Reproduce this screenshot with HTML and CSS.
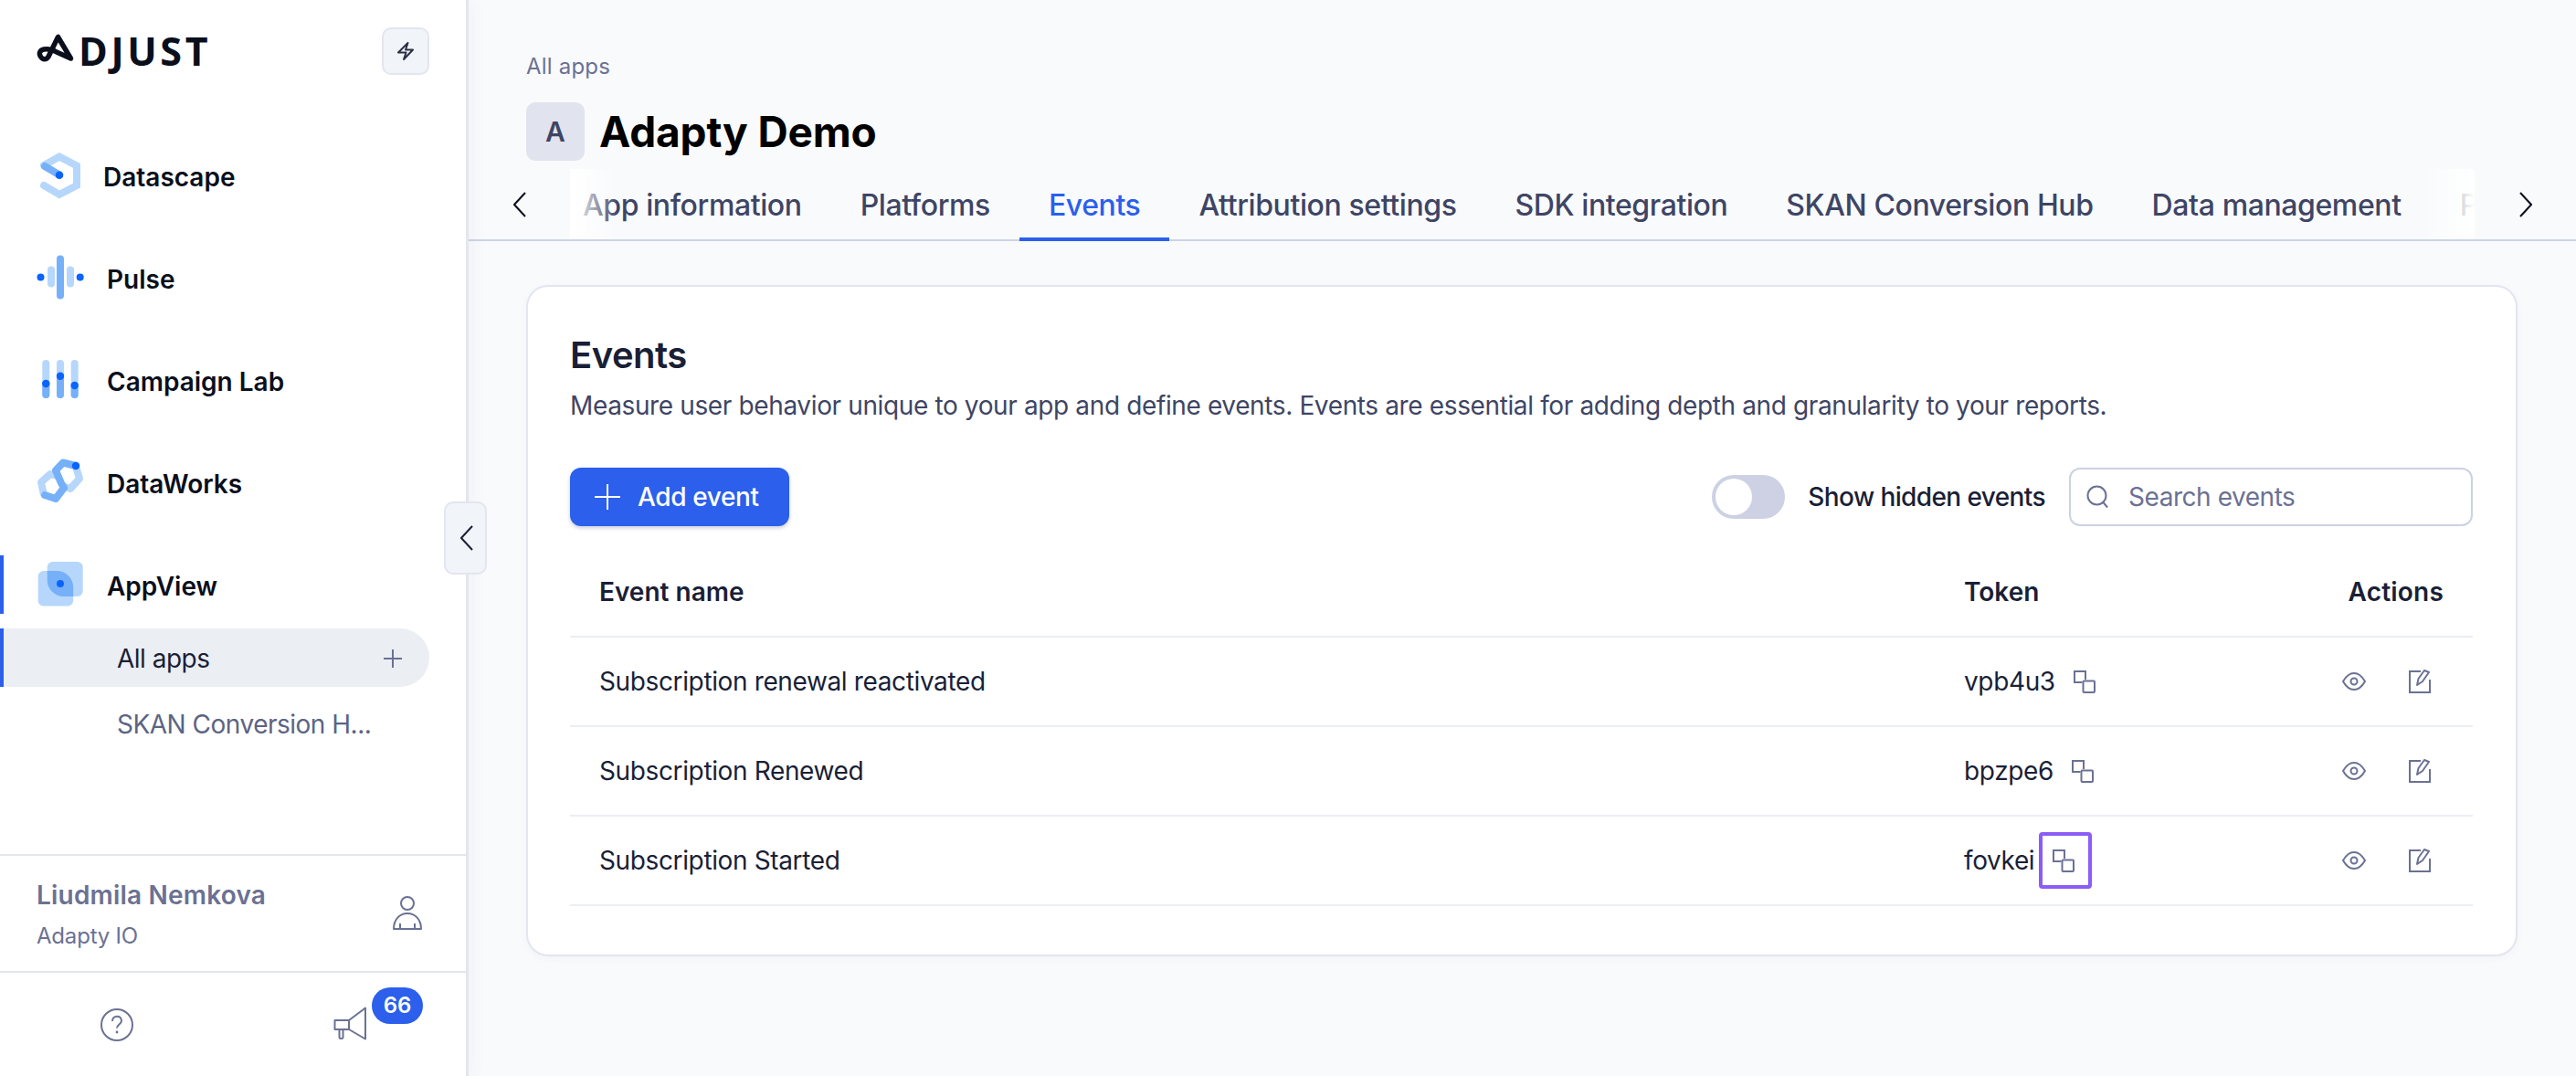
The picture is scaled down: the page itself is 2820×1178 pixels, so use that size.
FILE: index.html
```html
<!DOCTYPE html>
<html lang="en">
<head>
<meta charset="utf-8">
<title>Adapty Demo – Events</title>
<link rel="stylesheet" href="styles.css">
</head>
<body>
<div class="app">
  <aside class="sidebar">
    <div class="brand">
      <div class="logo">
        <svg class="logo-mark" viewBox="0 0 42 36" width="42" height="36"><path d="M37.5 27 23.5 3.5 13 25C10.500 29 7 28.500 4.500 25 2 21 4 18 8 17 13 16 17 17 22 20Z" fill="none" stroke="#0b0f1c" stroke-width="5.500" stroke-linejoin="round" stroke-linecap="round"/></svg>
        <span class="logo-text">DJUST</span>
      </div>
      <button class="bolt-btn" type="button">
        <svg viewBox="0 0 24 24" width="24" height="24"><path d="M14.5 3 4 13.5h8.500L10 21l10-10.500h-8z" fill="none" stroke="#2a2f45" stroke-width="2" stroke-linejoin="round"/></svg>
      </button>
    </div>
    <nav class="nav">
      <a class="nav-item nav-item-tight">
        <svg class="nav-icon" viewBox="0 0 52 52"><path d="M8 15 25 5.500 44 15.500V37L25 47 8 37" fill="none" stroke="#b6d7fb" stroke-width="8" stroke-linecap="round"/><path d="M9 16 25 25.500" stroke="#76b0f8" stroke-width="8" stroke-linecap="round"/><circle cx="25" cy="25.700" r="4.300" fill="#0a64ff"/></svg>
        <span>Datascape</span>
      </a>
      <a class="nav-item">
        <svg class="nav-icon" viewBox="0 0 52 52"><rect x="12" y="13.500" width="8" height="23" rx="4" fill="#b6d7fb"/><rect x="33" y="13.500" width="8" height="23" rx="4" fill="#b6d7fb"/><rect x="22" y="1.500" width="8" height="48" rx="4" fill="#76b0f8"/><circle cx="4.500" cy="25.500" r="4" fill="#0a64ff"/><circle cx="47.700" cy="25.500" r="4" fill="#0a64ff"/></svg>
        <span>Pulse</span>
      </a>
      <a class="nav-item">
        <svg class="nav-icon" viewBox="0 0 52 52"><path d="M10.300 8V42M26 8V42M41.700 8V42" stroke="#b6d7fb" stroke-width="8" stroke-linecap="round"/><path d="M10.300 30V42M26 22V42M41.700 32V42" stroke="#76b0f8" stroke-width="8" stroke-linecap="round"/><circle cx="10.300" cy="30" r="4.200" fill="#0a64ff"/><circle cx="26" cy="21.700" r="4.200" fill="#0a64ff"/><circle cx="41.700" cy="32" r="4.200" fill="#0a64ff"/></svg>
        <span>Campaign Lab</span>
      </a>
      <a class="nav-item">
        <svg class="nav-icon" viewBox="0 0 52 52"><path d="M43 9 47 22 37 33 28 30M8 40 5 26 15 17 22 19" fill="none" stroke="#b6d7fb" stroke-width="8" stroke-linejoin="round"/><path d="M43 8 29 4.500 21 13 27 27 30 32 21 44 9 40" fill="none" stroke="#76b0f8" stroke-width="8" stroke-linejoin="round" stroke-linecap="round"/><circle cx="43" cy="8" r="4.200" fill="#0a64ff"/></svg>
        <span>DataWorks</span>
      </a>
      <a class="nav-item nav-item-current">
        <svg class="nav-icon" viewBox="0 0 52 52"><rect x="1.700" y="11" width="38.500" height="38.500" rx="6" fill="#b6d7fb"/><rect x="11.700" y="1" width="39" height="38" rx="6" fill="#b6d7fb"/><path d="M11.700 11H22A18 18 0 0 1 40.200 29V39H30A18 18 0 0 1 11.700 21Z" fill="#76b0f8"/><circle cx="26" cy="25" r="4" fill="#0a64ff"/></svg>
        <span>AppView</span>
      </a>
      <div class="subnav">
        <a class="sub-item sub-item-active">
          <span>All apps</span>
          <svg viewBox="0 0 20 20" width="20" height="20"><path d="M10 0V20M0 10H20" stroke="#6b7193" stroke-width="2"/></svg>
        </a>
        <a class="sub-item">SKAN Conversion H...</a>
      </div>
    </nav>
    <button class="collapse-btn" type="button">
      <svg viewBox="0 0 14 28" width="14" height="28"><path d="M13 1 1 14l12 13" fill="none" stroke="#1a1f36" stroke-width="2"/></svg>
    </button>
    <div class="user">
      <div class="user-text">
        <div class="user-name">Liudmila Nemkova</div>
        <div class="user-org">Adapty IO</div>
      </div>
      <svg class="user-icon" viewBox="0 0 34 38" width="34" height="38"><circle cx="17" cy="8" r="7" fill="none" stroke="#6b7193" stroke-width="2"/><path d="M2 36C2 25 9 19 17 19S32 25 32 36ZM9 36V30M25 36V30" fill="none" stroke="#6b7193" stroke-width="2" stroke-linejoin="round"/></svg>
    </div>
    <div class="sidebar-foot">
      <div class="foot-cell">
        <svg viewBox="0 0 36 36" width="36" height="36"><circle cx="18" cy="18" r="17" fill="none" stroke="#6b7193" stroke-width="2"/><path d="M13 14c0-7 10-7 10 -.5 0 4-5 4-5 8" fill="none" stroke="#6b7193" stroke-width="2"/><circle cx="18" cy="26" r="1.400" fill="#6b7193"/></svg>
      </div>
      <div class="foot-cell">
        <svg class="megaphone" viewBox="0 0 36 37" width="36" height="37"><path d="M35 1.500V35.500L17 25V15ZM1.500 15H17V25H1.500ZM6.500 25V33.500Q6.500 35 8.500 35T10.500 33.500V25" fill="none" stroke="#6b7193" stroke-width="2" stroke-linejoin="round"/></svg>
        <span class="badge">66</span>
      </div>
    </div>
  </aside>

  <main class="main">
    <div class="page-head">
      <div class="crumb">All apps</div>
      <div class="title-row">
        <div class="avatar">A</div>
        <h1 class="title">Adapty Demo</h1>
      </div>
    </div>
    <div class="tabs">
      <button class="tab-arrow" type="button"><svg viewBox="0 0 14 28" width="14" height="28"><path d="M13 1 1 14l12 13" fill="none" stroke="#0b0f1c" stroke-width="2"/></svg></button>
      <div class="tab-window">
        <div class="tab-list">
          <a class="tab">App information</a>
          <a class="tab">Platforms</a>
          <a class="tab tab-active">Events</a>
          <a class="tab">Attribution settings</a>
          <a class="tab">SDK integration</a>
          <a class="tab">SKAN Conversion Hub</a>
          <a class="tab">Data management</a>
          <a class="tab">Partner setup</a>
        </div>
        <div class="fade fade-left"></div>
        <div class="fade fade-right"></div>
      </div>
      <button class="tab-arrow" type="button"><svg viewBox="0 0 14 28" width="14" height="28"><path d="M1 1 13 14 1 27" fill="none" stroke="#0b0f1c" stroke-width="2"/></svg></button>
    </div>

    <section class="card">
      <h2 class="card-title">Events</h2>
      <p class="card-desc">Measure user behavior unique to your app and define events. Events are essential for adding depth and granularity to your reports.</p>
      <div class="toolbar">
        <button class="add-btn" type="button">
          <svg viewBox="0 0 28 28" width="28" height="28"><path d="M14 0V28M0 14H28" stroke="#fff" stroke-width="2"/></svg>
          <span>Add event</span>
        </button>
        <div class="toolbar-right">
          <span class="toggle"><span class="knob"></span></span>
          <span class="toggle-label">Show hidden events</span>
          <div class="search">
            <svg viewBox="0 0 26 26" width="26" height="26"><circle cx="11.500" cy="11.500" r="10" fill="none" stroke="#6b7193" stroke-width="2"/><path d="M18.500 19 23 24.500" stroke="#6b7193" stroke-width="2"/></svg>
            <span>Search events</span>
          </div>
        </div>
      </div>
      <div class="table">
        <div class="row row-head">
          <div class="cell-name">Event name</div>
          <div class="cell-token">Token</div>
          <div class="cell-actions-head">Actions</div>
        </div>
        <div class="row">
          <div class="cell-name">Subscription renewal reactivated</div>
          <div class="cell-token"><span>vpb4u3</span>
            <button class="copy-btn" type="button"><svg class="copy-icon" viewBox="0 0 24 25" width="24" height="25"><path d="M13 10V1H1V13H9.500" fill="none" stroke="#6b7193" stroke-width="2"/><rect x="10.500" y="11.500" width="12.500" height="12.500" rx="1" fill="none" stroke="#6b7193" stroke-width="2"/></svg></button>
          </div>
          <div class="cell-actions">
            <svg viewBox="0 0 26 20" width="26" height="20"><path d="M1 10C5 3 9 1 13 1s8 2 12 9c-4 7-8 9-12 9S5 17 1 10Z" fill="none" stroke="#6b7193" stroke-width="2"/><circle cx="13" cy="10" r="3.500" fill="none" stroke="#6b7193" stroke-width="2"/></svg>
            <svg viewBox="0 0 24 26" width="24" height="26"><path d="M13 2H1V25H23V11" fill="none" stroke="#6b7193" stroke-width="2"/><path d="M9 17 10.500 10 17 1 22 3 15 13Z" fill="none" stroke="#6b7193" stroke-width="2" stroke-linejoin="round"/></svg>
          </div>
        </div>
        <div class="row">
          <div class="cell-name">Subscription Renewed</div>
          <div class="cell-token"><span>bpzpe6</span>
            <button class="copy-btn" type="button"><svg class="copy-icon" viewBox="0 0 24 25" width="24" height="25"><path d="M13 10V1H1V13H9.500" fill="none" stroke="#6b7193" stroke-width="2"/><rect x="10.500" y="11.500" width="12.500" height="12.500" rx="1" fill="none" stroke="#6b7193" stroke-width="2"/></svg></button>
          </div>
          <div class="cell-actions">
            <svg viewBox="0 0 26 20" width="26" height="20"><path d="M1 10C5 3 9 1 13 1s8 2 12 9c-4 7-8 9-12 9S5 17 1 10Z" fill="none" stroke="#6b7193" stroke-width="2"/><circle cx="13" cy="10" r="3.500" fill="none" stroke="#6b7193" stroke-width="2"/></svg>
            <svg viewBox="0 0 24 26" width="24" height="26"><path d="M13 2H1V25H23V11" fill="none" stroke="#6b7193" stroke-width="2"/><path d="M9 17 10.500 10 17 1 22 3 15 13Z" fill="none" stroke="#6b7193" stroke-width="2" stroke-linejoin="round"/></svg>
          </div>
        </div>
        <div class="row">
          <div class="cell-name">Subscription Started</div>
          <div class="cell-token"><span>fovkei</span>
            <button class="copy-btn copy-btn-focus" type="button"><svg class="copy-icon" viewBox="0 0 24 25" width="24" height="25"><path d="M13 10V1H1V13H9.500" fill="none" stroke="#6b7193" stroke-width="2"/><rect x="10.500" y="11.500" width="12.500" height="12.500" rx="1" fill="none" stroke="#6b7193" stroke-width="2"/></svg></button>
          </div>
          <div class="cell-actions">
            <svg viewBox="0 0 26 20" width="26" height="20"><path d="M1 10C5 3 9 1 13 1s8 2 12 9c-4 7-8 9-12 9S5 17 1 10Z" fill="none" stroke="#6b7193" stroke-width="2"/><circle cx="13" cy="10" r="3.500" fill="none" stroke="#6b7193" stroke-width="2"/></svg>
            <svg viewBox="0 0 24 26" width="24" height="26"><path d="M13 2H1V25H23V11" fill="none" stroke="#6b7193" stroke-width="2"/><path d="M9 17 10.500 10 17 1 22 3 15 13Z" fill="none" stroke="#6b7193" stroke-width="2" stroke-linejoin="round"/></svg>
          </div>
        </div>
      </div>
    </section>
  </main>
</div>
</body>
</html>
```

FILE: styles.css
```css
* { box-sizing: border-box; }
html, body { margin: 0; height: 100%; overflow: hidden; }
body {
  font-family: "Inter", "Liberation Sans", sans-serif;
  font-size: 28px;
  letter-spacing: -.37px;
  color: #1a1f36;
  background: #f9fafc;
}
button { font: inherit; letter-spacing: inherit; border: 0; background: none; padding: 0; }
svg { display: block; flex: none; }

.app { display: flex; height: 1178px; }

/* Sidebar */
.sidebar {
  position: relative;
  flex: none;
  width: 513px;
  display: flex;
  flex-direction: column;
  background: #fff;
  border-right: 3px solid #e3e5f0;
  box-shadow: 4px 0 16px rgba(60, 70, 120, .05);
}
.brand {
  display: flex;
  align-items: flex-start;
  justify-content: space-between;
  height: 160px;
  padding: 30px 40px 0 40px;
}
.logo { display: flex; align-items: flex-start; padding-top: 6px; }
.logo-mark { margin-top: 1px; }
.logo-text {
  font-family: "Open Sans", sans-serif;
  font-weight: 700;
  font-size: 43px;
  line-height: 40px;
  letter-spacing: 3.6px;
  color: #0b0f1c;
  margin-left: 4px;
}
.bolt-btn {
  width: 52px;
  height: 52px;
  display: flex;
  align-items: center;
  justify-content: center;
  background: #f1f4f8;
  border: 2px solid #e3e5f0;
  border-radius: 10px;
}
.nav { display: flex; flex-direction: column; gap: 48px; }
.nav-item {
  display: flex;
  align-items: center;
  gap: 25px;
  height: 64px;
  padding-left: 40px;
  font-weight: 600;
  font-size: 28px;
  letter-spacing: 0;
  color: #0b0f1c;
}
.nav-item span { padding-top: 3px; }
.nav-item-tight { gap: 21px; }
.nav-icon { width: 52px; height: 52px; }
.nav-item-current { border-left: 4px solid #2b5fec; padding-left: 36px; }
.subnav { display: flex; flex-direction: column; gap: 8px; margin-top: -32px; }
.sub-item {
  display: flex;
  align-items: center;
  justify-content: space-between;
  height: 64px;
  padding: 2px 30px 0 128px;
  color: #5c6484;
  font-size: 28px;
  letter-spacing: -.5px;
  width: 470px;
}
.sub-item-active {
  background: #ebeef3;
  color: #1a1f36;
  border-left: 4px solid #2b5fec;
  padding-left: 124px;
  border-radius: 0 32px 32px 0;
}
.collapse-btn {
  position: absolute;
  left: 486px;
  top: 549px;
  width: 47px;
  height: 80px;
  display: flex;
  align-items: center;
  justify-content: center;
  padding-left: 3px;
  background: #f1f4f8;
  border: 2px solid #e3e5f0;
  border-radius: 10px;
  z-index: 2;
}
.user {
  margin-top: auto;
  height: 130px;
  display: flex;
  align-items: center;
  justify-content: space-between;
  padding: 0 47px 0 40px;
  border-top: 2px solid #e3e5f0;
  border-bottom: 2px solid #e3e5f0;
}
.user-name { font-weight: 600; font-size: 28px; line-height: 36px; letter-spacing: .2px; color: #6b7193; }
.user-org { font-size: 24px; line-height: 28px; margin-top: 13px; letter-spacing: -.2px; color: #6b7193; }
.sidebar-foot { height: 113px; display: grid; grid-template-columns: 1fr 1fr; }
.foot-cell { position: relative; display: flex; align-items: center; justify-content: center; }
.megaphone { margin-top: -3px; }
.badge {
  position: absolute;
  left: 152px;
  top: 16px;
  width: 56px;
  height: 40px;
  border-radius: 20px;
  background: #2b5fec;
  color: #fff;
  font-weight: 600;
  font-size: 24px;
  letter-spacing: 0;
  line-height: 40px;
  text-align: center;
}

/* Main */
.main { flex: 1; min-width: 0; display: flex; flex-direction: column; }
.page-head { padding: 57px 63px 0; }
.crumb { font-size: 24px; line-height: 32px; letter-spacing: .2px; color: #6b7193; }
.title-row { display: flex; align-items: center; gap: 16px; margin-top: 23px; }
.avatar {
  width: 64px;
  height: 64px;
  border-radius: 10px;
  background: #e1e3ee;
  display: flex;
  align-items: center;
  justify-content: center;
  font-weight: 600;
  font-size: 30px;
  letter-spacing: 0;
  color: #3e4564;
}
.title { margin: 0; font-size: 46px; line-height: 56px; font-weight: 700; letter-spacing: -.15px; color: #000; }
.tabs {
  margin-top: 9px;
  height: 79px;
  display: flex;
  box-shadow: inset 0 -2px #cdd3e4;
}
.tab-arrow {
  flex: none;
  width: 111px;
  height: 77px;
  display: flex;
  align-items: center;
  justify-content: center;
}
.tab-window { position: relative; flex: 1; min-width: 0; overflow: hidden; }
.tab-list { display: flex; margin-left: -18px; }
.tab {
  flex: none;
  height: 79px;
  padding: 0 32px;
  display: flex;
  align-items: center;
  font-size: 32px;
  font-weight: 500;
  letter-spacing: -.4px;
  color: #3e4564;
  white-space: nowrap;
}
.tab-active { color: #2b5fec; box-shadow: inset 0 -4px #2b5fec; }
.fade { position: absolute; top: 0; height: 77px; }
.fade-left { left: 0; width: 70px; background: linear-gradient(90deg, #fff 0%, rgba(255, 255, 255, .7) 25%, rgba(255, 255, 255, 0) 75%); }
.fade-right { right: 0; width: 58px; background: linear-gradient(270deg, #fff 0%, rgba(255, 255, 255, .75) 30%, rgba(255, 255, 255, 0) 100%); }

.card {
  margin: 48px 64px 0 63px;
  height: 735px;
  padding: 51px 47px 0 46px;
  background: #fff;
  border: 2px solid #e3e5f0;
  border-radius: 24px;
  box-shadow: 0 2px 8px rgba(60, 70, 120, .04);
}
.card-title { margin: 0; font-size: 40px; line-height: 48px; font-weight: 600; letter-spacing: -.5px; }
.card-desc { margin: 11px 0 0; font-size: 28px; line-height: 40px; color: #3e4564; }
.toolbar { display: flex; justify-content: space-between; align-items: center; margin-top: 48px; height: 64px; }
.add-btn {
  width: 240px;
  height: 64px;
  display: flex;
  align-items: center;
  gap: 19px;
  padding-left: 27px;
  color: #fff;
  font-weight: 500;
  font-size: 28px;
  background: #2b5fec;
  border-radius: 12px;
  box-shadow: 0 2px 4px rgba(30, 50, 120, .25);
}
.toolbar-right { display: flex; align-items: center; }
.toggle {
  width: 80px;
  height: 48px;
  border-radius: 24px;
  background: #cdd1e3;
  padding: 4px;
  display: block;
}
.knob { display: block; width: 40px; height: 40px; border-radius: 50%; background: #fff; }
.toggle-label { margin-left: 25px; font-size: 28px; font-weight: 500; letter-spacing: -.6px; }
.search {
  width: 442px;
  height: 64px;
  margin-left: 26px;
  display: flex;
  align-items: center;
  gap: 20px;
  padding-left: 17px;
  border: 2px solid #cdd1e3;
  border-radius: 12px;
  color: #6b7193;
  font-size: 28px;
  letter-spacing: -.45px;
}
.table { display: flex; flex-direction: column; }
.row {
  display: grid;
  grid-template-columns: 1fr 413px 176px;
  align-items: center;
  height: 98px;
  border-bottom: 2px solid #ebeef3;
}
.row-head { height: 122px; padding-top: 24px; font-weight: 600; letter-spacing: 0; }
.cell-name { padding-left: 32px; }
.cell-token { display: flex; align-items: center; padding-left: 32px; }
.cell-actions-head { text-align: right; padding-right: 32px; letter-spacing: .2px; }
.cell-actions { display: flex; align-items: center; justify-content: flex-end; gap: 47px; padding-right: 46px; }
.copy-btn {
  width: 58px;
  height: 62px;
  margin-left: 5px;
  display: flex;
  align-items: center;
  justify-content: center;
  padding: 0 4px 0 0;
  border: 4px solid transparent;
  border-radius: 4px;
}
.copy-btn-focus { border-color: #8b5cf6; }
```
